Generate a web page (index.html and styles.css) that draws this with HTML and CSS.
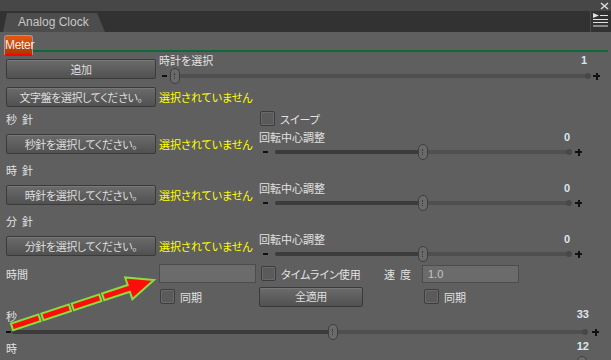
FILE: index.html
```html
<!DOCTYPE html>
<html lang="ja">
<head>
<meta charset="UTF-8">
<title>Analog Clock</title>
<link rel="stylesheet" href="styles.css">
</head>
<body>
<div class="window">
  <div class="titlebar">
    <svg class="close" width="9" height="8" viewBox="0 0 9 8"><path d="M1 1 L8 7 M8 1 L1 7" stroke="#d8d8d8" stroke-width="1.6"/></svg>
  </div>
  <div class="tabbar">
    <div class="doc-tab">Analog Clock</div>
    <div class="menu-btn">
      <svg width="17" height="17" viewBox="0 0 17 17">
        <path d="M1 1 L7 3.5 L1 6 Z" fill="#e0e0e0"/>
        <path d="M8 3.5 H16 M1 7.5 H16 M1 10.5 H16 M1 14 H16" stroke="#e0e0e0" stroke-width="1.2"/>
      </svg>
    </div>
  </div>

  <div class="panel">
    <div class="subtabs">
      <div class="meter-tab">Meter</div>
      <div class="green-line"></div>
    </div>

    <div class="row row-clock">
      <button class="btn">追加</button>
      <div class="ctrl">
        <div class="ctrl-head"><span>時計を選択</span><span class="val">1</span></div>
        <div class="slider" style="--p:0">
          <span class="sl-minus"></span>
          <div class="track"><div class="fill"></div><span class="thumb"></span></div>
          <span class="sl-plus"></span>
        </div>
      </div>
    </div>

    <div class="row row-select">
      <button class="btn">文字盤を選択してください。</button>
      <span class="note">選択されていません</span>
    </div>

    <!-- 秒針 -->
    <div class="row row-group">
      <span class="lbl wide">秒針</span>
      <span class="chk"></span><span class="chk-text">スイープ</span>
    </div>
    <div class="row row-hand">
      <button class="btn">秒針を選択してください。</button>
      <span class="note">選択されていません</span>
      <div class="rot">
        <div class="rot-head"><span>回転中心調整</span><span class="val">0</span></div>
        <div class="slider" style="--p:0.5">
          <span class="sl-minus"></span>
          <div class="track"><div class="fill"></div><span class="thumb"></span></div>
          <span class="sl-plus"></span>
        </div>
      </div>
    </div>

    <!-- 時針 -->
    <div class="row row-group">
      <span class="lbl wide">時針</span>
    </div>
    <div class="row row-hand">
      <button class="btn">時針を選択してください。</button>
      <span class="note">選択されていません</span>
      <div class="rot">
        <div class="rot-head"><span>回転中心調整</span><span class="val">0</span></div>
        <div class="slider" style="--p:0.5">
          <span class="sl-minus"></span>
          <div class="track"><div class="fill"></div><span class="thumb"></span></div>
          <span class="sl-plus"></span>
        </div>
      </div>
    </div>

    <!-- 分針 -->
    <div class="row row-group">
      <span class="lbl wide">分針</span>
    </div>
    <div class="row row-hand">
      <button class="btn">分針を選択してください。</button>
      <span class="note">選択されていません</span>
      <div class="rot">
        <div class="rot-head"><span>回転中心調整</span><span class="val">0</span></div>
        <div class="slider" style="--p:0.5">
          <span class="sl-minus"></span>
          <div class="track"><div class="fill"></div><span class="thumb"></span></div>
          <span class="sl-plus"></span>
        </div>
      </div>
    </div>

    <div class="row row-time">
      <span class="lbl time-lbl">時間</span>
      <input class="field" type="text" value="">
      <span class="chk"></span><span class="chk-text timeline">タイムライン使用</span>
      <span class="lbl speed-lbl">速度</span>
      <input class="field field-speed" type="text" value="1.0">
    </div>

    <div class="row row-sync">
      <span class="chk sync-a"></span><span class="chk-text sync-text">同期</span>
      <button class="btn btn-apply">全適用</button>
      <span class="chk sync-b"></span><span class="chk-text">同期</span>
    </div>

    <div class="row row-label"><span>秒</span><span class="val">33</span></div>
    <div class="row row-slider">
      <div class="slider" style="--p:0.559">
        <span class="sl-minus"></span>
        <div class="track"><div class="fill"></div><span class="thumb"></span></div>
        <span class="sl-plus"></span>
      </div>
    </div>

    <div class="row row-label"><span>時</span><span class="val">12</span></div>
    <div class="row row-slider">
      <div class="slider" style="--p:1">
        <span class="sl-minus"></span>
        <div class="track"><div class="fill"></div><span class="thumb"></span></div>
        <span class="sl-plus"></span>
      </div>
    </div>

    <svg class="arrow" width="170" height="80" viewBox="0 0 170 80">
      <g transform="translate(12 67) rotate(-18.3)" fill="#ff0d0d" stroke="#84e03a" stroke-width="2">
        <rect x="0" y="-3.5" width="29" height="7"/>
        <rect x="32" y="-3.5" width="29" height="7"/>
        <rect x="64" y="-3.5" width="29" height="7"/>
        <path d="M96 -3.5 H123 V-11.5 L149.5 0 L123 11.5 V3.5 H96 Z"/>
      </g>
    </svg>
  </div>
</div>
</body>
</html>
```

FILE: styles.css
```css
body {
  margin: 0;
  background: #5f5f5f;
  font-family: "Noto Sans CJK JP", sans-serif;
  font-size: 11px;
  color: #e2e2e2;
  font-feature-settings: "palt";
}
.window {
  width: 611px;
  height: 360px;
  overflow: hidden;
  display: flex;
  flex-direction: column;
}

/* top chrome */
.titlebar {
  height: 11px;
  flex-shrink: 0;
  background: #474747;
  display: flex;
  justify-content: flex-end;
}
.close {
  margin: 2px 2px 0 0;
}
.tabbar {
  height: 21px;
  flex-shrink: 0;
  background: #323232;
  display: flex;
  align-items: flex-end;
}
.doc-tab {
  margin-left: 3px;
  width: 102px;
  height: 19px;
  box-sizing: border-box;
  padding-left: 15px;
  background: #4d4d4d;
  clip-path: polygon(0 100%, 4px 0, 94px 0, 102px 100%);
  font: 12px "Liberation Sans", sans-serif;
  color: #c8c8c8;
  line-height: 18px;
}
.menu-btn {
  margin-left: auto;
  align-self: stretch;
  width: 21px;
  box-sizing: border-box;
  border-left: 1px solid #4a4a4a;
  padding: 1px 0 0 1px;
}

/* panel */
.panel {
  flex: 1;
  position: relative;
}
.subtabs {
  height: 22px;
  display: flex;
}
.meter-tab {
  margin: 3px 0 0 4px;
  width: 29px;
  height: 21px;
  box-sizing: border-box;
  border: 1px solid #9a9a9a;
  border-bottom: 2px solid #ff0000;
  border-radius: 3px 3px 0 0;
  background: linear-gradient(#e65810, #a83a00);
  font: 12px "Liberation Sans", sans-serif;
  letter-spacing: -0.3px;
  color: #ececec;
  text-align: center;
  line-height: 18px;
}
.green-line {
  flex: 1;
  height: 2px;
  margin: 18px 3px 0 0;
  background: #0b6b34;
}

.row {
  display: flex;
  padding-left: 6px;
}
.btn {
  width: 150px;
  height: 20px;
  flex-shrink: 0;
  box-sizing: border-box;
  padding: 0;
  border: 1px solid #3a3a3a;
  border-radius: 2px;
  background: linear-gradient(#6b6b6b, #515151);
  box-shadow: inset 0 1px 0 #777;
  color: #dedede;
  font: inherit;
  letter-spacing: -0.4px;
  line-height: 17px;
}
.note {
  color: #ffff00;
  margin-left: 3px;
  height: 20px;
  line-height: 20px;
}
.val {
  font: bold 11px "Liberation Sans", sans-serif;
  color: #dbe5ee;
}

.row-clock {
  height: 30px;
}
.row-clock .btn {
  margin-top: 5px;
}
.ctrl {
  flex: 1;
  margin-left: 3px;
  display: flex;
  flex-direction: column;
}
.ctrl-head {
  height: 12px;
  line-height: 12px;
  display: flex;
  justify-content: space-between;
  padding-right: 24px;
}
.ctrl .slider {
  margin-top: 2px;
  padding-right: 11px;
}
.ctrl .sl-minus {
  margin-left: 3px;
}

.row-select {
  height: 25px;
}
.row-select .btn,
.row-select .note {
  margin-top: 3px;
}

.row-group {
  height: 21px;
  line-height: 21px;
}
.lbl.wide {
  width: 253px;
  letter-spacing: 5px;
}
.chk {
  width: 15px;
  height: 15px;
  flex-shrink: 0;
  box-sizing: border-box;
  border: 1px solid #3c3c3c;
  border-radius: 2px;
  background: #5a5a5a;
  box-shadow: inset 0 0 0 1px #6a6a6a;
}
.row-group .chk {
  margin-top: 2px;
  margin-left: 1px;
}
.chk-text {
  margin-left: 5px;
}

.row-hand {
  height: 30px;
}
.row-hand .btn,
.row-hand .note {
  margin-top: 4px;
}
.row-hand .note {
  width: 100px;
}
.rot {
  width: 323px;
  display: flex;
  flex-direction: column;
}
.rot-head {
  margin-top: 1px;
  height: 12px;
  line-height: 12px;
  display: flex;
  justify-content: space-between;
  padding-right: 12px;
}
.rot .slider {
  margin-top: 1px;
  height: 16px;
}
.rot .sl-minus {
  margin-left: 4px;
}
.rot .track {
  margin-left: 7px;
  margin-right: 4px;
}

/* slider */
.slider {
  display: flex;
  align-items: center;
  height: 16px;
}
.sl-minus {
  width: 5px;
  height: 2px;
  flex-shrink: 0;
  background: #111;
}
.sl-plus {
  width: 7px;
  height: 7px;
  flex-shrink: 0;
  background:
    linear-gradient(#111, #111) center / 7px 2px no-repeat,
    linear-gradient(#111, #111) center / 2px 7px no-repeat;
}
.track {
  flex: 1;
  height: 4px;
  margin: 0 3px;
  position: relative;
  border-radius: 2px;
  background: #4f4f4f;
}
.track::after {
  content: "";
  position: absolute;
  right: -1px;
  top: -1px;
  width: 6px;
  height: 6px;
  border-radius: 50%;
  background: #484848;
}
.fill {
  position: absolute;
  left: 0;
  top: 0;
  bottom: 0;
  width: calc((100% - 10px) * var(--p) + 5px);
  border-radius: 2px;
  background: #3c3c3c;
}
.thumb {
  position: absolute;
  z-index: 1;
  top: -6px;
  left: calc((100% - 10px) * var(--p));
  width: 10px;
  height: 16px;
  box-sizing: border-box;
  border: 1px solid #3e3e3e;
  border-radius: 5px;
  background: #6a6a6a;
}
.thumb::after {
  content: "";
  position: absolute;
  left: 3px;
  top: 4px;
  height: 6px;
  border-left: 1px dotted #3a3a3a;
}

/* time / speed */
.row-time {
  height: 23px;
  align-items: center;
}
.time-lbl {
  width: 153px;
}
.field {
  width: 97px;
  height: 19px;
  box-sizing: border-box;
  margin: 0;
  padding: 0 5px;
  border: 1px solid #4c4c4c;
  background: #6b6b6b;
  color: #c4c4c4;
  font: 11px "Liberation Sans", sans-serif;
}
.row-time .chk {
  margin-left: 5px;
}
.timeline {
  width: 103px;
}
.speed-lbl {
  width: 38px;
  letter-spacing: 5px;
}
.field-speed {
  height: 18px;
}

.row-sync {
  height: 23px;
  align-items: center;
}
.sync-a {
  margin-left: 154px;
}
.sync-text {
  width: 79px;
}
.btn-apply {
  width: 104px;
}
.sync-b {
  margin-left: 61px;
}

.row-label {
  height: 16px;
  line-height: 16px;
  justify-content: space-between;
  padding-right: 22px;
}
.row-slider {
  height: 16px;
  padding-right: 12px;
}
.row-slider .slider {
  flex: 1;
}
.row-slider .track {
  margin: 0 5px 0 1px;
}

.arrow {
  position: absolute;
  left: 0;
  top: 228px;
}
```
